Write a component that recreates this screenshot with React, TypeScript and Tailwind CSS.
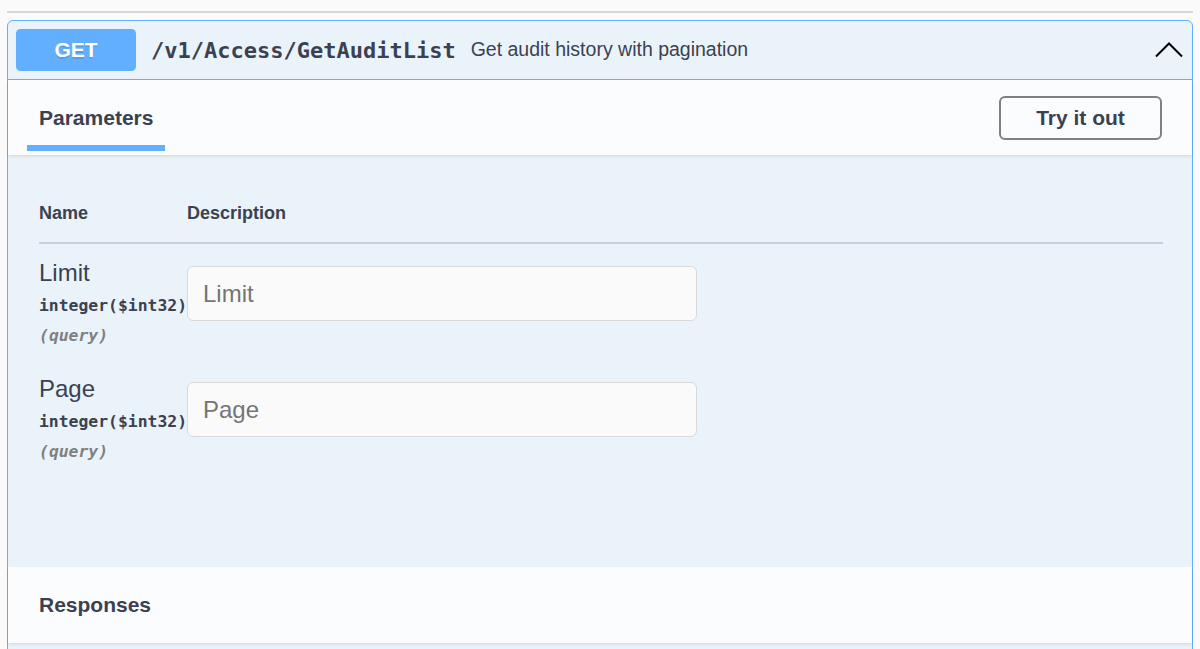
import React from 'react'

const params = [
  { name: 'Limit', type: 'integer', format: '$int32', in: 'query' },
  { name: 'Page', type: 'integer', format: '$int32', in: 'query' },
]

const mono = "font-['DejaVu_Sans_Mono',monospace]"

export default function App() {
  return (
    <div className="min-h-screen bg-[#fafafa] font-['Liberation_Sans',Arial,sans-serif] text-[#3b4151]">
      <div className="px-[7px] pt-[11px]">
        <div className="h-[2px] bg-[#d6d8dc]" />

        <div className="mt-[7px] rounded-[6px] border border-[#61affe] bg-[#ebf3fa]">
          {/* summary */}
          <div className="flex items-center border-b border-[#61affe] p-2 pr-[9px]">
            <div className="flex h-[42px] w-[120px] items-center justify-center rounded-[4.5px] bg-[#61affe] text-[21px] font-bold text-white [text-shadow:0_1.5px_0_rgba(0,0,0,0.1)]">
              GET
            </div>
            <span className={`ml-[15px] ${mono} text-[22px] font-bold`}>/v1/Access/GetAuditList</span>
            <span className="ml-[15px] text-[19.5px]">Get audit history with pagination</span>
            <svg className="ml-auto" width="28" height="16" viewBox="0 0 28 16">
              <polyline points="1,14.5 14,1.5 27,14.5" fill="none" stroke="#000" strokeWidth="2" />
            </svg>
          </div>

          {/* parameters header */}
          <div className="relative z-[1] flex h-[75px] items-stretch justify-between bg-[#fbfcfe] pl-[19px] pr-[30px] shadow-[0_1.5px_3px_rgba(0,0,0,0.1)]">
            <div className="flex flex-col justify-end pb-[4px]">
              <div className="px-[12px] text-[21px] font-bold leading-[24px]">Parameters</div>
              <div className="mt-[15px] h-[6px] bg-[#61affe]" />
            </div>
            <div className="flex items-center">
              <button className="h-[44px] w-[163px] rounded-[6px] border-2 border-[#808080] text-[21px] font-bold text-[#3b4151]">
                Try it out
              </button>
            </div>
          </div>

          {/* parameters table */}
          <div className="pb-[91px] pl-[31px] pr-[29px] pt-[30px]">
            <div className="flex border-b-2 border-[#c9ced8] py-[18px] text-[18px] font-bold leading-[21px]">
              <div className="w-[148px]">Name</div>
              <div>Description</div>
            </div>
            {params.map(p => (
              <div key={p.name} className="flex pb-[9px] pt-[15px]">
                <div className="w-[148px] shrink-0">
                  <div className="text-[24px] leading-[28px]">{p.name}</div>
                  <div className={`mt-[4px] whitespace-nowrap ${mono} text-[16.4px] font-bold leading-[30px]`}>
                    {p.type}
                    <span>({p.format})</span>
                  </div>
                  <div className={`${mono} text-[16.4px] font-bold italic leading-[30px] text-[#808080]`}>({p.in})</div>
                </div>
                <div>
                  <input
                    placeholder={p.name}
                    className="mt-[7px] h-[55px] w-[510px] rounded-[6px] border border-[#d9d9d9] bg-[#fafafa] px-[15px] text-[24px] outline-none placeholder:text-[#757575]"
                  />
                </div>
              </div>
            ))}
          </div>

          {/* responses header */}
          <div className="relative z-[1] flex h-[76px] items-center bg-[#fbfcfe] px-[31px] shadow-[0_1.5px_3px_rgba(0,0,0,0.1)]">
            <h4 className="text-[21px] font-bold">Responses</h4>
          </div>
          <div className="h-[40px]" />
        </div>
      </div>
    </div>
  )
}
